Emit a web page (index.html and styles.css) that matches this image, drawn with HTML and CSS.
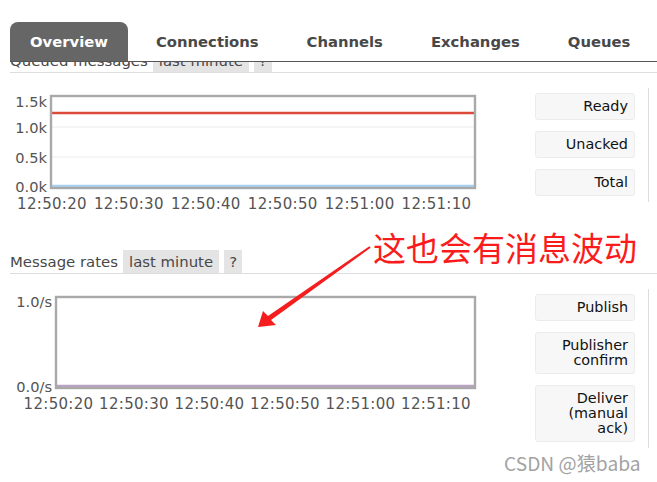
FILE: index.html
```html
<!DOCTYPE html>
<html lang="zh-CN">
<head>
<meta charset="utf-8">
<title>Overview</title>
<link rel="stylesheet" href="styles.css">
</head>
<body>
<header class="tabs-bar">
  <ul class="tabs">
    <li class="tab active">Overview</li>
    <li class="tab">Connections</li>
    <li class="tab">Channels</li>
    <li class="tab">Exchanges</li>
    <li class="tab">Queues</li>
  </ul>
</header>

<main class="page">
  <section class="section">
    <h2 class="sec-head"><span class="title">Queued messages</span><span class="pill">last minute</span><span class="pill help">?</span></h2>
    <div class="sec-body">
      <svg class="chart" width="470" height="140" viewBox="0 0 470 140">
        <line class="grid" x1="42" y1="54" x2="464" y2="54"/>
        <line class="grid" x1="42" y1="84" x2="464" y2="84"/>
        <line class="s-ready" x1="42" y1="40" x2="464" y2="40"/>
        <line class="s-unacked" x1="42" y1="113" x2="464" y2="113"/>
        <rect class="frame" x="41" y="23" width="424" height="92"/>
        <g class="ylab">
          <text x="37" y="28">1.5k</text>
          <text x="37" y="54.5">1.0k</text>
          <text x="37" y="84.5">0.5k</text>
          <text x="37" y="113.5">0.0k</text>
        </g>
        <g class="xlab">
          <text x="42" y="130.5">12:50:20</text>
          <text x="118.9" y="130.5">12:50:30</text>
          <text x="195.8" y="130.5">12:50:40</text>
          <text x="272.7" y="130.5">12:50:50</text>
          <text x="349.6" y="130.5">12:51:00</text>
          <text x="426.5" y="130.5">12:51:10</text>
        </g>
      </svg>
      <div class="legend-area">
        <ul class="legend">
          <li>Ready</li>
          <li>Unacked</li>
          <li>Total</li>
        </ul>
      </div>
    </div>
  </section>

  <section class="section">
    <h2 class="sec-head"><span class="title">Message rates</span><span class="pill">last minute</span><span class="pill help">?</span></h2>
    <div class="sec-body">
      <svg class="chart" width="470" height="140" viewBox="0 0 470 140">
        <line class="s-rate" x1="47" y1="112" x2="464" y2="112"/>
        <rect class="frame" x="46" y="23" width="419" height="91"/>
        <g class="ylab">
          <text x="42" y="27">1.0/s</text>
          <text x="42" y="112.5">0.0/s</text>
        </g>
        <g class="xlab">
          <text x="48.5" y="130">12:50:20</text>
          <text x="124" y="130">12:50:30</text>
          <text x="199.5" y="130">12:50:40</text>
          <text x="275" y="130">12:50:50</text>
          <text x="350.5" y="130">12:51:00</text>
          <text x="426" y="130">12:51:10</text>
        </g>
      </svg>
      <div class="legend-area">
        <ul class="legend">
          <li>Publish</li>
          <li>Publisher confirm</li>
          <li>Deliver (manual ack)</li>
        </ul>
      </div>
    </div>
  </section>
</main>

<svg class="arrow" width="657" height="482" viewBox="0 0 657 482">
  <polygon points="258,327 276,325 271,320 370.6,247.8 369.4,246.2 268,316 263,311"/>
</svg>
<div class="note">这也会有消息波动</div>
<div class="watermark">CSDN @猿baba</div>
</body>
</html>
```

FILE: styles.css
```css
html, body {
  margin: 0;
  padding: 0;
  background: #fff;
}

body {
  font-family: "DejaVu Sans", Verdana, sans-serif;
  color: #484848;
  width: 657px;
  height: 482px;
  overflow: hidden;
  position: relative;
}

/* ---------- tab bar (fixed, lies over the scrolled content) ---------- */
.tabs-bar {
  position: absolute;
  top: 0;
  left: 0;
  right: 0;
  height: 62px;
  background: #fff;
  z-index: 5;
}

.tabs {
  list-style: none;
  margin: 0 0 0 10px;
  padding: 22px 0 0 0;
  display: flex;
  border-bottom: 1px solid #555;
  height: 39px;
}

.tab {
  padding: 0 20px;
  margin-right: 8px;
  line-height: 39px;
  font-size: 14.8px;
  font-weight: bold;
  color: #484848;
  white-space: nowrap;
}

.tab.active {
  background: #666;
  color: #fff;
  border-radius: 8px 8px 0 0;
}

/* ---------- page ---------- */
.page {
  padding: 49px 0 0 10px;
}

.section {
  margin-bottom: 37px;
}

.sec-head {
  margin: 0;
  display: flex;
  align-items: flex-start;
  height: 23px;
  border-bottom: 1px solid #ddd;
  font-size: 14.9px;
  font-weight: normal;
  line-height: 25px;
  color: #484848;
}

.pill {
  margin-left: 5px;
  padding: 0 6px;
  height: 23px;
  background: #e4e4e4;
  color: #484848;
}

.pill.help {
  width: 18px;
  padding: 0;
  text-align: center;
}

.sec-body {
  display: flex;
  align-items: flex-start;
}

.chart {
  display: block;
  flex: none;
}

.grid {
  stroke: #ececec;
  stroke-width: 1;
}

.s-ready {
  stroke: #dc4a3a;
  stroke-width: 2.5;
}

.s-unacked {
  stroke: #a9d0f0;
  stroke-width: 2.5;
}

.s-rate {
  stroke: #b9a3c4;
  stroke-width: 2.5;
}

.frame {
  fill: none;
  stroke: #a9a9a9;
  stroke-width: 2.4;
}

.ylab text,
.xlab text {
  font-family: "DejaVu Sans", Verdana, sans-serif;
  font-size: 14.6px;
  fill: #545454;
  dominant-baseline: central;
}

.ylab text {
  text-anchor: end;
}

.xlab text {
  text-anchor: middle;
  font-size: 15px;
  letter-spacing: 0.3px;
}

.legend-area {
  margin: 15px 0 0 55px;
  padding: 5px 13px 6px 0;
  border-right: 1px solid #ddd;
}

.legend {
  list-style: none;
  margin: 0;
  padding: 0;
  width: 100px;
}

.legend li {
  box-sizing: border-box;
  width: 100px;
  padding: 5px 6px 5px 6px;
  margin-bottom: 11px;
  line-height: 15px;
  font-size: 14.4px;
  text-align: right;
  color: #111;
  background: #f7f7f7;
  border: 1px solid #ececec;
  border-radius: 3px;
}

.legend li:last-child {
  margin-bottom: 0;
}

/* ---------- annotation overlay ---------- */
.arrow {
  position: absolute;
  left: 0;
  top: 0;
  z-index: 6;
  pointer-events: none;
}

.arrow polygon {
  fill: #f51d1d;
}

.note {
  position: absolute;
  left: 373px;
  top: 229px;
  z-index: 6;
  font-family: "Noto Sans CJK SC", sans-serif;
  font-size: 33px;
  line-height: 36px;
  color: #fa1c1c;
  white-space: nowrap;
}

.watermark {
  position: absolute;
  left: 504px;
  top: 450px;
  z-index: 6;
  font-family: "Noto Sans CJK SC", sans-serif;
  font-size: 19.2px;
  line-height: 26px;
  color: #a3a3a3;
  white-space: nowrap;
}
```
